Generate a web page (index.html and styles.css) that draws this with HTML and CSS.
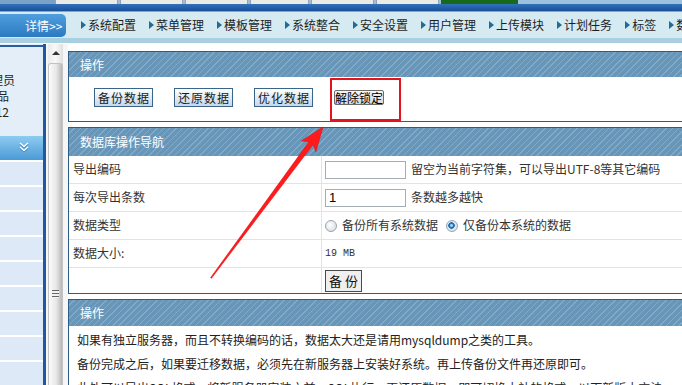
FILE: index.html
```html
<!DOCTYPE html>
<html lang="zh-CN">
<head>
	<meta charset="utf-8" />
	<title>数据库备份</title>
	<link rel="stylesheet" href="styles.css">
</head>
<body>
<div class="tabs">
	<span class="tab-logo"></span>
	<span class="tab"></span>
	<span class="tab"></span>
	<span class="tab"></span>
	<span class="tab tab-s"></span>
	<span class="tab"></span>
	<span class="tab"></span>
	<span class="tab tab-green"></span>
</div>
<div class="band"></div>
<div class="nav">
	<a class="detail" href="#">详情&gt;&gt;</a>
	<ul class="menu">
		<li>系统配置</li>
		<li>菜单管理</li>
		<li>模板管理</li>
		<li>系统整合</li>
		<li>安全设置</li>
		<li>用户管理</li>
		<li>上传模块</li>
		<li>计划任务</li>
		<li>标签</li>
		<li>数据管理</li>
	</ul>
</div>
<div class="navfoot"></div>

<div class="frame">
	<div class="side">
		<div class="userbox">
			<p>超级管理员</p>
			<p class="ub-short">用户组 品</p>
			<p class="ub-short">2012-12-12</p>
		</div>
		<div class="side-head">
			<svg width="10" height="10" viewBox="0 0 10 10"><path d="M1 1 L5 4.5 L9 1 M1 5 L5 8.5 L9 5" fill="none" stroke="#fff" stroke-width="1.5"/></svg>
		</div>
		<ul class="side-list">
			<li></li><li></li><li></li><li></li><li></li><li></li><li></li><li></li><li></li>
		</ul>
	</div>

	<div class="scroll">
		<div class="scroll-track">
			<span class="scroll-up"></span>
			<span class="scroll-thumb"><i></i></span>
		</div>
	</div>

	<div class="main">
		<div class="panel">
			<div class="panel-head head-1">操作</div>
			<div class="actions">
				<button class="btn">备份数据</button>
				<button class="btn">还原数据</button>
				<button class="btn">优化数据</button>
				<button class="btn-sys">解除锁定</button>
				<span class="mark"></span>
			</div>
		</div>

		<div class="panel">
			<div class="panel-head head-2">数据库操作导航</div>
			<div class="form">
				<div class="row">
					<div class="label">导出编码</div>
					<div class="value"><input class="text" type="text" value=""><span>留空为当前字符集，可以导出UTF-8等其它编码</span></div>
				</div>
				<div class="row">
					<div class="label">每次导出条数</div>
					<div class="value"><input class="text" type="text" value="1"><span>条数越多越快</span></div>
				</div>
				<div class="row">
					<div class="label">数据类型</div>
					<div class="value"><span class="radio"></span><span>备份所有系统数据</span><span class="radio radio-on"></span><span>仅备份本系统的数据</span></div>
				</div>
				<div class="row">
					<div class="label">数据大小:</div>
					<div class="value"><span class="mono">19 MB</span></div>
				</div>
				<div class="row row-last">
					<div class="label"></div>
					<div class="value"><button class="btn-go">备份</button></div>
				</div>
			</div>
		</div>

		<div class="panel">
			<div class="panel-head head-3">操作</div>
			<div class="notes">
				<p>如果有独立服务器，而且不转换编码的话，数据太大还是请用mysqldump之类的工具。</p>
				<p>备份完成之后，如果要迁移数据，必须先在新服务器上安装好系统。再上传备份文件再还原即可。</p>
				<p>此外可以导出SQL格式，将新服务器安装之前，SQL执行，再还原数据，即可切换本站的格式，以下新版本方法。</p>
			</div>
		</div>
	</div>
</div>

<svg class="arrow" width="682" height="385" viewBox="0 0 682 385">
	<polygon points="210.6,277.7 309.1,141.6 301.5,140.9 323,127 315.9,151.7 313.1,144.6 211.4,278.3" fill="#ff1b1b" stroke="#e01010" stroke-width="0.6"/>
</svg>
</body>
</html>
```

FILE: styles.css
```css
html, body {
	margin: 0;
	height: 385px;
	overflow: hidden;
}
body {
	width: 720px;
	position: relative;
	font: 12px/1.4 "Noto Sans CJK SC", sans-serif;
	color: #333;
	background: #fff;
}

/* top strip */
.tabs {
	display: flex;
	height: 4px;
	background: #9dc0dc;
}
.tab-logo {
	width: 55px;
	background: #7aa2c6;
}
.tab {
	width: 63px;
	margin-right: 2px;
	background: #eceae5;
	box-shadow: inset 1px 0 #96a3b0, inset -1px 0 #96a3b0;
}
.tab-s {
	width: 59px;
}
.tab-green {
	width: 77px;
	background: #17691c;
	box-shadow: none;
}
.band {
	height: 7px;
	background: linear-gradient(#3172ba, #1b4f99);
	border-bottom: 1px solid #78a9d4;
}

/* nav bar */
.nav {
	height: 26px;
	display: flex;
	align-items: center;
	background: #d6eaf2;
	white-space: nowrap;
}
.detail {
	flex: none;
	width: 66px;
	height: 23px;
	box-sizing: border-box;
	padding-left: 25px;
	line-height: 23px;
	color: #fff;
	text-decoration: none;
	background: linear-gradient(#4f9edc, #2b7ac2);
	border-radius: 0 5px 5px 0;
}
.menu {
	display: flex;
	list-style: none;
	margin: 0 0 0 15px;
	padding: 0;
	color: #1e1e1e;
}
.menu li {
	display: flex;
	align-items: center;
	margin-right: 13px;
}
.menu li::before {
	content: "";
	border-left: 5px solid #1f6c94;
	border-top: 4px solid transparent;
	border-bottom: 4px solid transparent;
	margin-right: 2px;
}
.navfoot {
	height: 5px;
	background: #a8d0e0;
	border-bottom: 1px solid #fff;
}

/* frame */
.frame {
	display: flex;
	height: 341px;
	overflow: hidden;
}
.side {
	flex: none;
	width: 43px;
	border-right: 3px solid #2258a2;
	background: #e3eef9;
	display: flex;
	flex-direction: column;
}
.userbox {
	height: 101px;
	margin-top: 1px;
	box-sizing: border-box;
	border-top: 2px solid #2a5e9f;
	padding: 25px 28px 0 0;
	line-height: 16px;
	color: #222;
}
.userbox p {
	margin: 0;
	display: flex;
	justify-content: flex-end;
	white-space: nowrap;
}
.userbox .ub-short {
	margin-right: 6px;
}
.side-head {
	height: 27px;
	margin-top: 2px;
	box-sizing: border-box;
	padding: 6px 0 0 5px;
	display: flex;
	justify-content: center;
	background: linear-gradient(#8dccf1, #4b9ad6);
}
.side-head svg {
	filter: drop-shadow(0 1px 0 #3a7fb8);
}
.side-list {
	list-style: none;
	margin: 0;
	padding: 0;
	flex: 1;
}
.side-list li {
	height: 23px;
	border-top: 2px solid #fff;
	background: #dde9f6;
}

/* scrollbar */
.scroll {
	flex: none;
	width: 22px;
	box-sizing: border-box;
	padding: 0 5px 0 2px;
	background: #f6f6f6;
}
.scroll-track {
	height: 100%;
	display: flex;
	flex-direction: column;
	background: linear-gradient(90deg, #ebebeb, #f8f8f8 50%, #e0e0e0);
}
.scroll-up {
	flex: none;
	height: 18px;
	display: flex;
	justify-content: center;
	align-items: center;
}
.scroll-up::before {
	content: "";
	border-bottom: 4px solid #333;
	border-left: 4px solid transparent;
	border-right: 4px solid transparent;
}
.scroll-thumb {
	flex: none;
	height: 460px;
	margin-top: 1px;
	border: 1px solid #c2c2c2;
	border-bottom: 0;
	border-radius: 3px 3px 0 0;
	background: linear-gradient(90deg, #fbfbfb, #e8e8e8 55%, #b8b8b8);
	display: flex;
	align-items: center;
	justify-content: center;
}
.scroll-thumb i {
	width: 7px;
	height: 8px;
	background: repeating-linear-gradient(#666 0 1px, #f2f2f2 1px 3px);
}

/* content */
.main {
	flex: 1;
	min-width: 0;
	padding-top: 7px;
}
.panel {
	border: 1px solid #2c5d87;
	margin-bottom: 5px;
}
.panel-head {
	padding-left: 11px;
	color: #fff;
	background: repeating-linear-gradient(135deg, #6796b9 0 3.5px, #80aac8 3.5px 4.5px);
}
.head-1 {
	height: 25px;
	line-height: 25px;
}
.head-2 {
	height: 28px;
	line-height: 28px;
}
.head-3 {
	height: 26px;
	line-height: 26px;
}

.actions {
	position: relative;
	height: 44px;
	box-sizing: border-box;
	padding: 11px 0 0 25px;
	display: flex;
	align-items: flex-start;
	gap: 21px;
}
.btn {
	height: 19px;
	padding: 0 2px 0 3px;
	border: 1px solid #3c6388;
	background: linear-gradient(#fff, #c3d8ee);
	font: 12px/17px "Noto Sans CJK SC", sans-serif;
	letter-spacing: 1px;
	color: #1a1a1a;
}
.btn-sys {
	height: 15px;
	margin-top: 2px;
	padding: 0;
	border: 1px solid #6c6c6c;
	border-radius: 2px;
	background: linear-gradient(#f7f7f7, #d9d9d9);
	font: 12px/13px "Noto Sans CJK SC", sans-serif;
	color: #000;
}
/* red annotation box */
.mark {
	position: absolute;
	left: 261px;
	top: 1px;
	width: 67px;
	height: 39px;
	border: 2px solid #e3141b;
}

.row {
	display: flex;
	height: 27px;
	border-bottom: 1px solid #e3e3e3;
}
.row-last {
	height: 25px;
	border-bottom: 0;
}
.label {
	flex: none;
	width: 253px;
	box-sizing: border-box;
	padding-left: 4px;
	display: flex;
	align-items: center;
	border-right: 1px solid #e3e3e3;
}
.value {
	padding-left: 3px;
	display: flex;
	align-items: center;
	gap: 5px;
	white-space: nowrap;
}
.text {
	width: 81px;
	height: 18px;
	margin: 0;
	box-sizing: border-box;
	border: 1px solid #a5acb2;
	padding: 0 3px;
	font: 13px "Liberation Sans", sans-serif;
	color: #000;
}
.radio {
	width: 12px;
	height: 12px;
	box-sizing: border-box;
	border-radius: 50%;
	border: 1px solid #9aa5af;
	background: radial-gradient(circle at 40% 40%, #fff, #d2d6da);
}
.radio-on {
	margin-left: 3px;
	background: radial-gradient(circle at 45% 45%, #9fd0f4 0 1px, #1f6fb6 2px 3px, #e4e9ee 3.5px, #d2d6da);
}
.mono {
	font: 10px "Liberation Mono", monospace;
	color: #333;
}
.btn-go {
	width: 37px;
	height: 22px;
	padding: 0 0 0 3px;
	border: 1px solid #4a4a4a;
	background: #efefef;
	font: 13px/20px "Noto Sans CJK SC", sans-serif;
	letter-spacing: 3px;
	text-align: left;
	color: #111;
}

.notes {
	padding: 2px 0 0 8px;
	line-height: 24px;
	color: #222;
}
.notes p {
	margin: 0;
	white-space: nowrap;
}

/* red annotation arrow */
.arrow {
	position: absolute;
	left: 0;
	top: 0;
	pointer-events: none;
}
```
